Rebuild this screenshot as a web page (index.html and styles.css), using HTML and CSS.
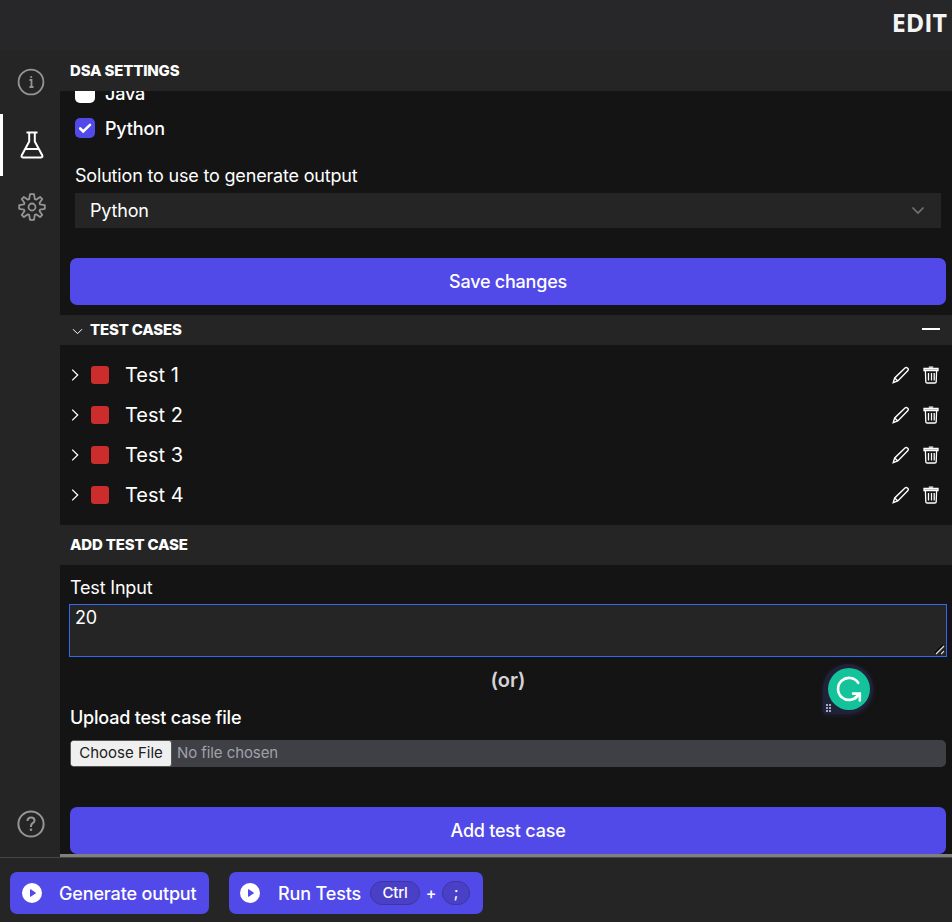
FILE: index.html
```html
<!DOCTYPE html>
<html lang="en">
<head>
<meta charset="utf-8">
<title>Edit</title>
<link rel="stylesheet" href="styles.css">
</head>
<body>
<svg class="defs" aria-hidden="true">
  <symbol id="chevron" viewBox="0 0 8 14"><path d="M1.2 1.6 6.7 7 1.2 12.4"/></symbol>
  <symbol id="pencil" viewBox="0 0 18 18"><path d="M1.2 16.6 2.7 12 13 2a1.7 1.7 0 0 1 2.4 0l.3.3a1.7 1.7 0 0 1 0 2.4L5.8 14.9zM2.7 12l3.1 2.9"/></symbol>
  <symbol id="trash" viewBox="0 0 16 18"><path class="lid" d="M1 2.5h14v2H1z"/><path d="M5.8 1.2h4.4M2.4 4.8l.4 11.1q.1 1.1 1.3 1.1h7.8q1.2 0 1.3-1.1l.4-11.1M5.5 7v7.5M8.5 7v7.5M11.2 7v7.5"/></symbol>
  <symbol id="play" viewBox="0 0 20 20"><circle cx="10" cy="10" r="10"/><path class="play-mark" d="M8 6.6v6.8q.1.5.7.3l4.8-3.1q.7-.6 0-1.2L8.7 6.3Q8.1 6 8 6.6z"/></symbol>
</svg>
<header class="topbar"><span>EDIT</span></header>
<div class="workspace">
  <nav class="rail">
    <a class="rail-item info"><svg width="28" height="28" viewBox="0 0 28 28"><circle cx="14" cy="14" r="12.4"/><path d="M12.5 12h2v7M12.5 19h4"/><circle class="solid" cx="14.2" cy="9" r="1.1"/></svg></a>
    <a class="rail-item active"><svg width="24" height="28" viewBox="0 0 24 28"><path d="M6.5 1.5h11M9.2 1.5v9L1.8 24.2q-.9 2.2 1.2 2.2h18q2.1 0 1.2-2.2L14.8 10.5v-9M5.3 18h13.4"/></svg></a>
    <a class="rail-item gear"><svg width="28" height="28" viewBox="0 0 28 28"><circle cx="14" cy="14" r="3.5"/><path d="M12 1.2h4l.8 5 1.3.5 4-2.8 2.2 2.2-2.8 4 .5 1.3 4.8.8v3.6l-4.8.8-.5 1.3 2.8 4-2.2 2.2-4-2.8-1.3.5-.8 5h-4l-.8-5-1.3-.5-4 2.8-2.2-2.2 2.8-4-.5-1.3-4.8-.8v-3.6l4.8-.8.5-1.3-2.8-4 2.2-2.2 4 2.8 1.3-.5z"/></svg></a>
    <a class="rail-item help"><svg width="28" height="28" viewBox="0 0 28 28"><circle cx="14" cy="14" r="12.6"/><path d="M10.5 11q0-3.6 3.6-3.6 3.4 0 3.4 3 0 1.6-1.8 2.8Q14 14.3 14 16v1"/><circle class="solid" cx="14" cy="19.8" r="1.3"/></svg></a>
  </nav>
  <main class="panel">
    <h2 class="bar">DSA SETTINGS</h2>
    <section class="settings">
      <div class="languages">
        <label class="check"><i class="box"></i>Java</label>
        <label class="check"><i class="box on"><svg width="20" height="20" viewBox="0 0 20 20"><path d="m5.2 10.5 3 3 6.8-6.6"/></svg></i>Python</label>
      </div>
      <p class="select-label">Solution to use to generate output</p>
      <div class="select">Python<svg width="14" height="9" viewBox="0 0 14 9"><path d="m1.5 1.5 5.5 5.5 5.5-5.5"/></svg></div>
      <button class="primary">Save changes</button>
    </section>
    <h2 class="bar slim"><svg width="11" height="7" viewBox="0 0 11 7"><path d="m1 1.2 4.5 4.5L10 1.2"/></svg>TEST CASES<span class="minus"></span></h2>
    <ul class="tests">
      <li><svg class="arrow"><use href="#chevron"/></svg><i class="status"></i>Test 1<svg class="edit"><use href="#pencil"/></svg><svg class="trash"><use href="#trash"/></svg></li>
      <li><svg class="arrow"><use href="#chevron"/></svg><i class="status"></i>Test 2<svg class="edit"><use href="#pencil"/></svg><svg class="trash"><use href="#trash"/></svg></li>
      <li><svg class="arrow"><use href="#chevron"/></svg><i class="status"></i>Test 3<svg class="edit"><use href="#pencil"/></svg><svg class="trash"><use href="#trash"/></svg></li>
      <li><svg class="arrow"><use href="#chevron"/></svg><i class="status"></i>Test 4<svg class="edit"><use href="#pencil"/></svg><svg class="trash"><use href="#trash"/></svg></li>
    </ul>
    <h2 class="bar">ADD TEST CASE</h2>
    <section class="add">
      <p class="input-label">Test Input</p>
      <div class="input">20<svg width="10" height="10" viewBox="0 0 10 10"><path class="grip-shade" d="M0 8 8 0M5 9l4-4"/><path d="M1 9 9 1M6 9l3-3"/></svg></div>
      <p class="or">(or)</p>
      <p class="file-label">Upload test case file</p>
      <div class="file"><span class="choose">Choose File</span><span>No file chosen</span></div>
      <button class="primary">Add test case</button>
      <div class="assistant">
        <svg width="42" height="42" viewBox="0 0 42 42"><circle cx="21" cy="21" r="21"/><path d="M30.2 14.8A11 11 0 1 0 30.5 26.5"/><path d="M25 25.6h6.8v6.8M31.3 26l-4 4"/></svg>
        <svg class="dots" width="6" height="9" viewBox="0 0 6 9"><path d="M0 1h2M3 1h2M0 4h2M3 4h2M0 7h2M3 7h2"/></svg>
      </div>
    </section>
    <div class="edge"></div>
  </main>
</div>
<footer class="actions">
  <button class="action generate"><svg><use href="#play"/></svg>Generate output</button>
  <button class="action run"><svg><use href="#play"/></svg>Run Tests<kbd class="ctrl">Ctrl</kbd><span class="plus">+</span><kbd class="semi">;</kbd></button>
</footer>
</body>
</html>
```
FILE: styles.css
```css
* { box-sizing: border-box; }
body {
  margin: 0;
  height: 922px;
  overflow: hidden;
  display: flex;
  flex-direction: column;
  background: #252525;
  color: #fff;
  font: 18px/27px Inter, "Liberation Sans", sans-serif;
  letter-spacing: -0.18px;
}
h2, p, ul { margin: 0; padding: 0; }
svg { display: block; flex: none; fill: none; stroke: currentColor; overflow: visible; }
.defs { position: absolute; width: 0; height: 0; }
.topbar {
  height: 51px;
  flex: none;
  display: flex;
  justify-content: flex-end;
  padding: 4px 5px 0 0;
  background: #27272a;
  font: 700 25px/36px "Open Sans", sans-serif;
  letter-spacing: 0;
  color: #f4f4f5;
}
.workspace { display: flex; height: 806px; flex: none; }
.rail { width: 60px; display: flex; flex-direction: column; }
.rail-item {
  height: 62px;
  display: flex;
  align-items: center;
  justify-content: center;
  padding-left: 2px;
  color: #959595;
  stroke-width: 1.8;
}
.rail-item.info { height: 63px; padding-bottom: 1px; }
.rail-item.active { color: #fff; border-left: 3px solid #fff; padding-left: 0; stroke-width: 2; }
.rail-item.gear { padding-left: 3px; stroke-linejoin: round; }
.rail-item.help { margin-top: auto; margin-bottom: 2px; stroke-width: 2; }
.solid { fill: currentColor; stroke: none; }
.panel { flex: 1; background: #141414; display: flex; flex-direction: column; }
.bar {
  height: 40px;
  flex: none;
  display: flex;
  align-items: center;
  padding: 0 12px 0 10px;
  background: #252525;
  font-size: 15px;
  font-weight: 800;
  line-height: 22px;
}
.bar.slim { height: 30px; padding-left: 12px; }
.bar.slim svg { margin: 2px 7px 0 0; }
.minus { width: 18px; height: 1.5px; margin: 0 0 2px auto; background: #fff; }
.settings { height: 224px; flex: none; padding: 0 6px 0 10px; overflow: hidden; }
.languages { height: 55px; display: flex; flex-direction: column; justify-content: flex-end; overflow: hidden; padding-left: 5px; }
.check { display: flex; align-items: center; height: 35px; flex: none; font-weight: 500; }
.box { width: 20px; height: 20px; margin: 0 10px 1px 0; border-radius: 5px; background: #fff; }
.box.on { background: #5249e9; }
.box svg { stroke-width: 2.6; stroke-linecap: round; }
.select-label { margin: 16px 5px 4px; line-height: 27px; }
.select {
  height: 35px;
  margin: 0 5px 30px;
  padding: 0 16px 0 15px;
  display: flex;
  align-items: center;
  justify-content: space-between;
  background: #252525;
}
.select svg { color: #71717a; stroke-width: 1.7; }
button { font-family: inherit; color: #fff; border: 0; border-radius: 7px; background: #5249e9; font-size: 18px; font-weight: 500; letter-spacing: -0.22px; }
.primary { display: block; width: 100%; height: 47px; padding: 0; }
.tests { list-style: none; height: 180px; flex: none; padding: 10px 12px 10px 11px; }
.tests li { height: 40px; display: flex; align-items: center; font-size: 20px; letter-spacing: 0; }
.arrow { width: 8px; height: 14px; stroke-width: 1.3; }
.status { width: 18px; height: 18px; margin: 0 16px 0 12px; border-radius: 3px; background: #cb2d2c; }
.edit { width: 18px; height: 18px; margin-left: auto; stroke-width: 1.4; }
.trash { width: 16px; height: 18px; margin: 0 1px 1px 13px; stroke-width: 1.3; }
.lid { fill: #888; }
.add { position: relative; height: 289px; flex: none; padding: 9px 6px 0 10px; }
.input-label { height: 30px; }
.input {
  height: 53px;
  margin: 0 -1px;
  border: 1px solid #3468f0;
  background: #252525;
  padding: 0 5px;
  line-height: 26px;
  position: relative;
}
.input svg { position: absolute; right: 1px; bottom: 1px; stroke-width: 1.2; color: #ddd; }
.grip-shade { stroke: #000; }
.or { margin-top: 10px; text-align: center; font-size: 20px; font-weight: 600; letter-spacing: 0; color: #d4d4d8; }
.file-label { margin-top: 10px; font-weight: 500; letter-spacing: -0.21px; }
.file {
  height: 27px;
  margin: 9px 0 40px;
  display: flex;
  align-items: center;
  border-radius: 5px;
  background: #3f3f46;
  color: #a1a1aa;
  font-size: 15px;
  line-height: 25px;
  letter-spacing: -0.08px;
  overflow: hidden;
}
.file span { height: 27px; }
.file .choose { width: 102px; margin-right: 5px; border: 1px solid #555; border-radius: 3px; background: #efefef; color: #202020; text-align: center; line-height: 24px; letter-spacing: 0; }
.edge { height: 3px; background: #808080; }
.assistant {
  position: absolute;
  left: 763px;
  top: 99px;
  width: 50px;
  height: 50px;
  padding: 4px 4px 4px 5px;
  border-radius: 25px 25px 25px 4px;
  background: #202239;
  box-shadow: 0 1px 5px #202239;
}
.assistant circle { fill: #15c39a; stroke: none; }
.assistant path { stroke-width: 2.6; stroke-linecap: round; }
.assistant .dots { position: absolute; left: 3px; top: 40px; }
.assistant .dots path { stroke: #d2d5ef; stroke-width: 1.6; stroke-linecap: butt; }
.actions { flex: 1; display: flex; align-items: flex-start; gap: 20px; padding: 14px 10px 0; border-top: 1px solid #454545; }
.action { height: 42px; display: flex; align-items: center; padding: 0 0 0 12px; letter-spacing: -0.15px; }
.action svg { width: 20px; height: 20px; margin-right: 17px; fill: #fff; stroke: none; }
.play-mark { fill: #5249e9; }
.generate { width: 199px; }
.run { width: 254px; padding-left: 11px; }
.run svg { margin-right: 18px; }
kbd { height: 24px; border: 1px solid #3e369d; border-radius: 12px; background: #4940c7; font: 500 15px/21px Inter, sans-serif; text-align: center; }
.ctrl { width: 50px; margin-left: 9px; }
.semi { width: 28px; }
.plus { width: 22px; text-align: center; font-size: 16px; }
```
